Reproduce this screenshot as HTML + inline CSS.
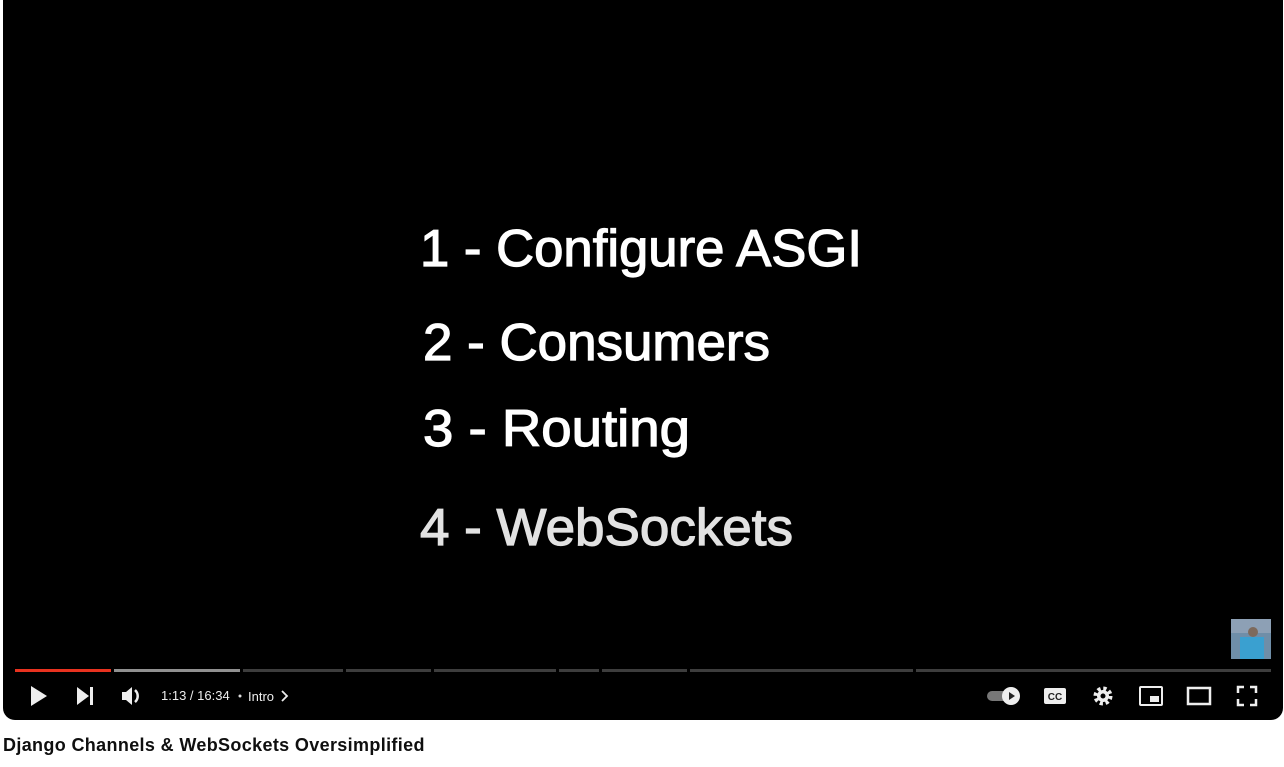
<!DOCTYPE html>
<html><head><style>
html,body{margin:0;padding:0;background:#fff;width:1284px;height:767px;overflow:hidden;font-family:"Liberation Sans",sans-serif}
#v{position:absolute;left:3px;top:0;width:1280px;height:720px;background:#000;border-radius:0 0 12px 12px;overflow:hidden}
.t{position:absolute;left:3px;top:735px;font-size:18px;font-weight:bold;color:#0f0f0f;letter-spacing:0.35px}
</style></head><body>
<div id="v"></div>
<svg width="1284" height="720" style="position:absolute;left:0;top:0">
<g font-family="Liberation Sans, sans-serif" font-size="52" fill="#fff" stroke="#fff" stroke-width="1.2">
<text x="420" y="266" textLength="442" lengthAdjust="spacingAndGlyphs">1 - Configure ASGI</text>
<text x="423" y="360" textLength="347" lengthAdjust="spacingAndGlyphs">2 - Consumers</text>
<text x="423" y="446" textLength="267" lengthAdjust="spacingAndGlyphs">3 - Routing</text>
<text x="420" y="545" textLength="373" lengthAdjust="spacingAndGlyphs" fill="#e2e2e2" stroke="#e2e2e2">4 - WebSockets</text>
</g>
<rect x="1231" y="619" width="40" height="40" fill="#6f8ea8"/>
<rect x="1231" y="619" width="40" height="14" fill="#8da0b5"/>
<rect x="1240" y="637" width="24" height="22" fill="#3aa0d0"/>
<circle cx="1253" cy="632" r="5" fill="#7d6a5c"/>
<rect x="15" y="669" width="96" height="3" fill="#e8321f"/>
<rect x="114" y="669" width="126" height="3" fill="#909090"/>
<g fill="#3d3d3d">
<rect x="243" y="669" width="100" height="3"/>
<rect x="346" y="669" width="85" height="3"/>
<rect x="434" y="669" width="122" height="3"/>
<rect x="559" y="669" width="40" height="3"/>
<rect x="602" y="669" width="85" height="3"/>
<rect x="690" y="669" width="223" height="3"/>
<rect x="916" y="669" width="355" height="3"/>
</g>
<g fill="#eee">
<path d="M31 686 L47 696 L31 706 Z"/>
<path d="M77 687 L89 696 L77 705 Z"/><rect x="90" y="687" width="3" height="18"/>
<path d="M122 692 h4 l6 -5 v18 l-6 -5 h-4 z"/>
<path d="M135 690 a8 8 0 0 1 0 12" stroke="#eee" stroke-width="2.5" fill="none"/>
</g>
<text x="161" y="700" font-family="Liberation Sans, sans-serif" font-size="13" fill="#eee">1:13 / 16:34</text>
<circle cx="240" cy="696" r="1.5" fill="#ddd"/>
<text x="248" y="701" font-family="Liberation Sans, sans-serif" font-size="13" fill="#eee">Intro</text>
<path d="M282 691 l5 5 l-5 5" stroke="#eee" stroke-width="1.8" fill="none"/>
<rect x="987" y="691" width="26" height="10" rx="5" fill="#777"/>
<circle cx="1011" cy="696" r="9" fill="#eee"/>
<path d="M1009 692 l6 4 l-6 4 z" fill="#222"/>
<rect x="1044" y="688" width="22" height="16" rx="2" fill="#eee"/>
<text x="1055" y="700" text-anchor="middle" font-family="Liberation Sans, sans-serif" font-size="10" font-weight="bold" fill="#222">CC</text>
<circle cx="1103" cy="696" r="7.5" fill="none" stroke="#eee" stroke-width="4" stroke-dasharray="3.2 2.7"/>
<circle cx="1103" cy="696" r="6" fill="#eee"/><circle cx="1103" cy="696" r="2.5" fill="#000"/>
<rect x="1140" y="687" width="22" height="18" rx="1" fill="none" stroke="#eee" stroke-width="2"/>
<rect x="1150" y="696" width="9" height="6" fill="#eee"/>
<rect x="1188" y="688" width="22" height="16" fill="none" stroke="#eee" stroke-width="2.5"/>
<path d="M1238 693 v-6 h6 M1250 687 h6 v6 M1256 699 v6 h-6 M1244 705 h-6 v-6" stroke="#eee" stroke-width="2.5" fill="none"/>
</svg>
<div class="t">Django Channels &amp; WebSockets Oversimplified</div>
</body></html>
